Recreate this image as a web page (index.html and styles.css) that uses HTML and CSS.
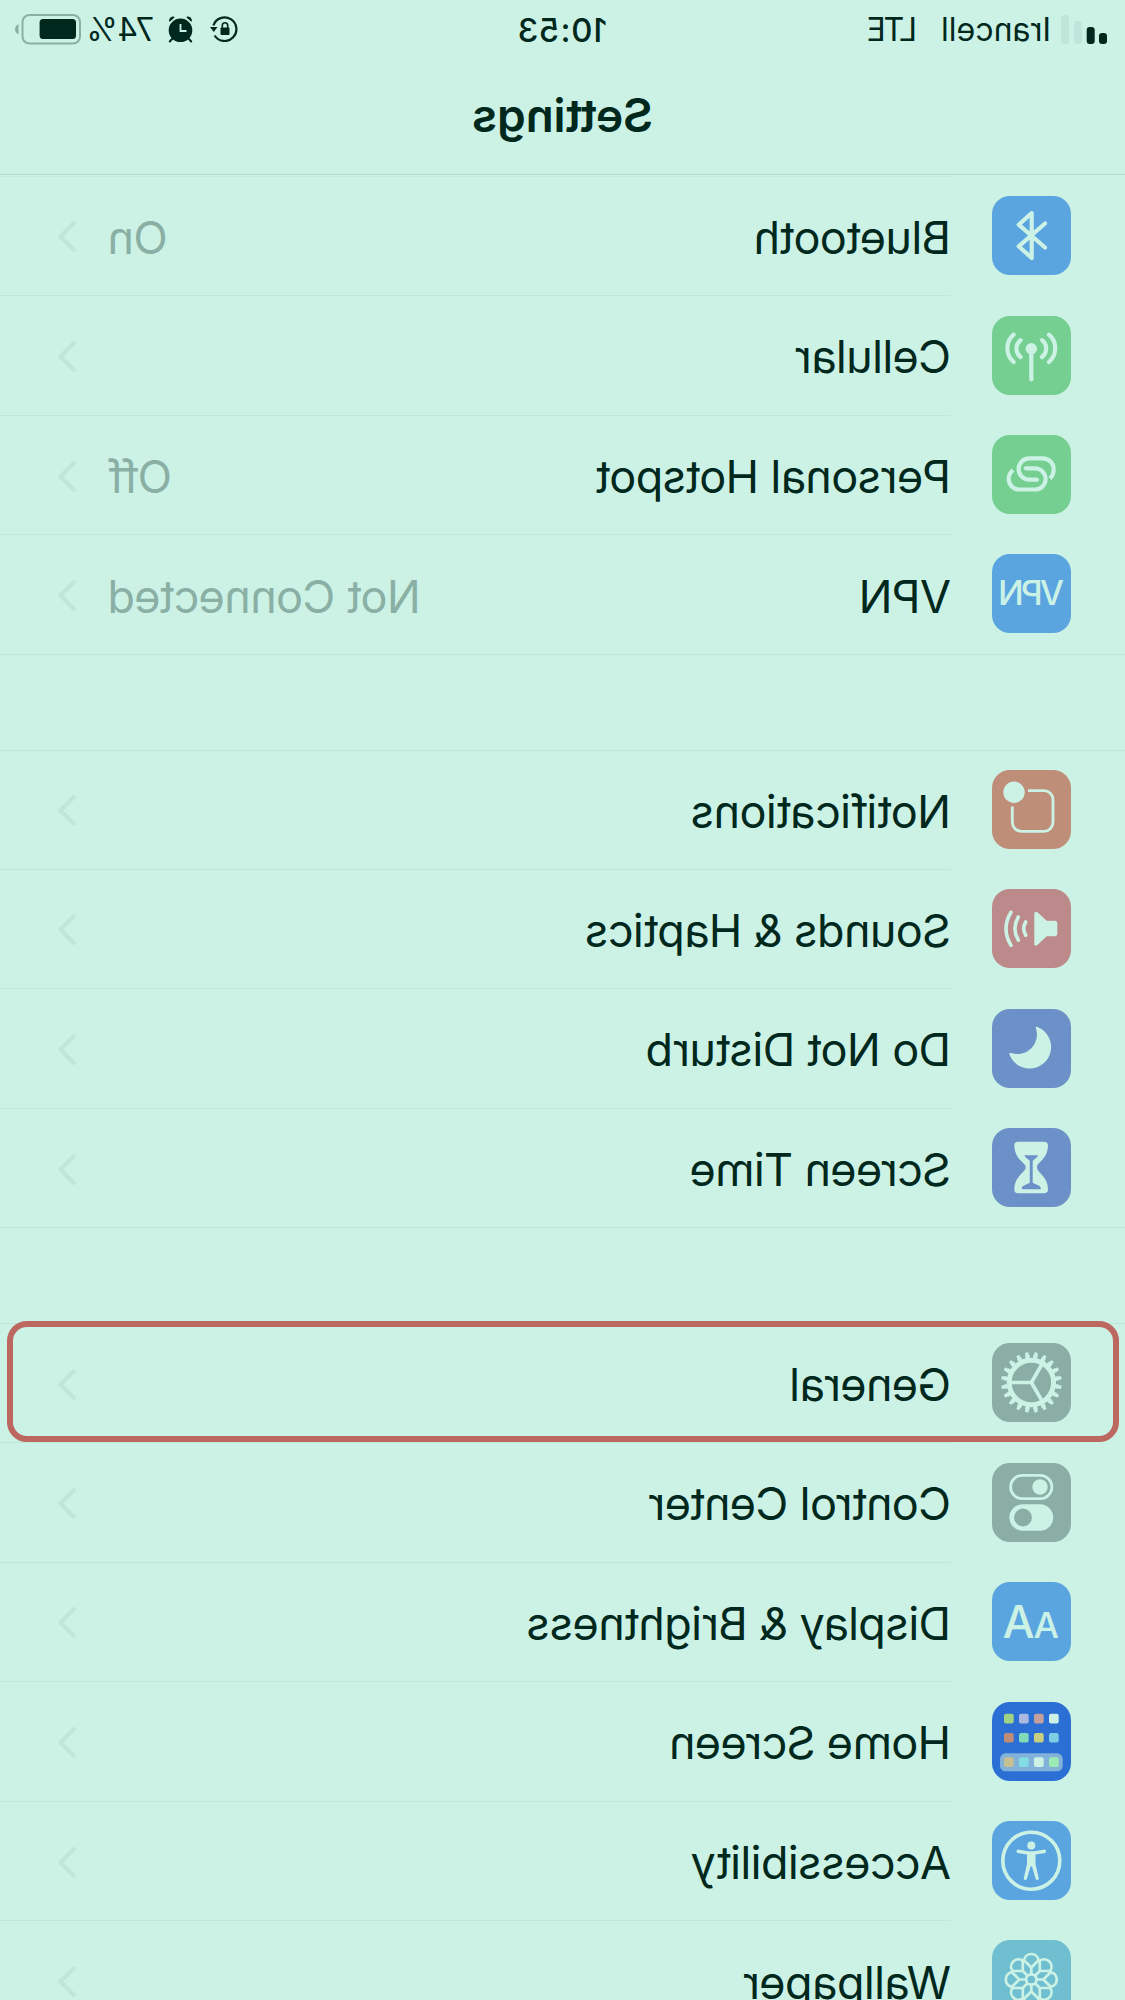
FILE: index.html
```html
<!DOCTYPE html>
<html lang="en">
<head>
    <meta charset="UTF-8">
    <title>Settings</title>
    <link rel="stylesheet" href="styles.css">
</head>
<body>
    <svg class="defs">
        <symbol id="chevron" viewBox="0 0 18 31">
            <path d="M2.3 2.2 15.5 15.5 2.3 28.8" fill="none" stroke="currentColor" stroke-width="4.2" stroke-linecap="round" stroke-linejoin="round"/>
        </symbol>
        <path id="petal" d="M0-12-7.3-19.3A7.4 7.4 0 0 1 7.3-19.3ZM0-5V-12"/>
    </svg>

    <!-- the whole screen is flipped -->
    <div class="screen">
        <header>
            <div class="status">
                <svg class="signal" viewBox="0 0 47 30">
                    <rect x="0" y="19" width="8" height="11" rx="3"/>
                    <rect x="12.3" y="13" width="8" height="17" rx="3"/>
                    <rect class="off" x="25" y="7" width="8" height="23" rx="3"/>
                    <rect class="off" x="38" y="1" width="8" height="29" rx="3"/>
                </svg>
                <span class="carrier">Irancell</span>
                <span class="net">LTE</span>
                <span class="time">10:53</span>
                <svg class="lock" viewBox="0 0 28 26">
                    <path d="M24.6 9.5A11.8 11.8 0 1 0 23.4 19.5" fill="none" stroke="currentColor" stroke-width="2.2"/>
                    <path d="M20.5 11h7.5l-3.8 5z"/>
                    <rect x="8.5" y="11.5" width="9" height="7.5" rx="1"/>
                    <path d="M10.3 12V9.5a2.7 2.7 0 0 1 5.4 0V12" fill="none" stroke="currentColor" stroke-width="1.6"/>
                </svg>
                <svg class="alarm" viewBox="0 0 25 27">
                    <circle cx="12.5" cy="14.3" r="11.8"/>
                    <path d="M4.5 22.5 1.8 25.5M20.5 22.5 23.2 25.5" stroke="currentColor" stroke-width="2" stroke-linecap="round"/>
                    <path d="M1 5.5Q1 .5 6 .6L6.5 1.5 2 5.5ZM24 5.5Q24 .5 19 .6L18.5 1.5 23 5.5Z"/>
                    <path class="hand" d="M12.5 8V15H6.5"/>
                </svg>
                <span class="percent">74%</span>
                <svg class="battery" viewBox="0 0 67 31">
                    <rect class="shell" x="1" y="1" width="57.5" height="28.6" rx="7"/>
                    <rect x="5" y="5" width="36.4" height="20" rx="3.5"/>
                    <path class="nub" d="M62.5 10Q66 12 66 15.3T62.5 20.6Z"/>
                </svg>
            </div>
            <h1>Settings</h1>
        </header>

        <div class="tail"></div>
        <ul class="group first">
            <li>
                <svg class="icon blue" viewBox="0 0 79 79"><path class="line" d="M26 27.5 52.3 50.3 39.3 62V17L52.3 28.7 26 51.5"/></svg>
                <div class="cell"><span>Bluetooth</span><em>On</em><svg class="chev"><use href="#chevron"/></svg></div>
            </li>
            <li>
                <svg class="icon green" viewBox="0 0 79 79">
                    <circle cx="39.7" cy="32.7" r="5.7"/>
                    <path class="line" d="M39.7 34V63.5M29 24.2A10.6 10.6 0 0 0 29 41M22 18.7A18.1 18.1 0 0 0 22 46M50.4 24.2A10.6 10.6 0 0 1 50.4 41M57.4 18.7A18.1 18.1 0 0 1 57.4 46"/>
                </svg>
                <div class="cell"><span>Cellular</span><svg class="chev"><use href="#chevron"/></svg></div>
            </li>
            <li>
                <svg class="icon green" viewBox="0 0 79 79">
                    <path class="line butt" d="M21 43.5Q17.2 40 17.3 34A11 10.7 0 0 1 28.3 23.3H41.7A10.7 10.7 0 0 1 41.7 44.7H34"/>
                    <path class="line butt" d="M58 35Q62.5 39 62.3 44A10.5 10.5 0 0 1 51.8 54.5H36A10.6 10.6 0 0 1 36 33.3H45.3"/>
                    <circle cx="34" cy="44.7" r="2"/><circle cx="45.3" cy="33.3" r="2"/>
                </svg>
                <div class="cell"><span>Personal Hotspot</span><em>Off</em><svg class="chev"><use href="#chevron"/></svg></div>
            </li>
            <li>
                <svg class="icon blue" viewBox="0 0 79 79"><text x="7" y="51" font-size="34" textLength="66">VPN</text></svg>
                <div class="cell"><span>VPN</span><em>Not Connected</em><svg class="chev"><use href="#chevron"/></svg></div>
            </li>
        </ul>

        <ul class="group">
            <li>
                <svg class="icon orange" viewBox="0 0 79 79">
                    <circle cx="57" cy="22.3" r="10.7"/>
                    <path class="line thin butt" d="M43 20.7H27a9 9 0 0 0-9 9V52.3a9 9 0 0 0 9 9H49.7a9 9 0 0 0 9-9V36.5"/>
                </svg>
                <div class="cell"><span>Notifications</span><svg class="chev"><use href="#chevron"/></svg></div>
            </li>
            <li>
                <svg class="icon rose" viewBox="0 0 79 79">
                    <path d="M16.5 31.7H24.3L33 23.8Q36.7 21 36.7 25V54.5Q36.7 58.5 33 55.5L24.3 47.3H16.5Q13.7 47.3 13.7 44.5V34.5Q13.7 31.7 16.5 31.7Z"/>
                    <path class="line wave" d="M45.3 33Q49.3 39.6 45.3 46.2M52.7 28Q59.5 39.6 52.7 51.2M60 23.2Q70 39.6 60 56.3"/>
                </svg>
                <div class="cell"><span>Sounds &amp; Haptics</span><svg class="chev"><use href="#chevron"/></svg></div>
            </li>
            <li>
                <svg class="icon indigo" viewBox="0 0 79 79"><path d="M33.5 18A21.5 21.5 0 1 0 61.5 45.6Q62.3 43.6 60 44A19.5 19.5 0 0 1 35.3 18.8Q35.4 17 33.5 18Z"/></svg>
                <div class="cell"><span>Do Not Disturb</span><svg class="chev"><use href="#chevron"/></svg></div>
            </li>
            <li>
                <svg class="icon indigo" viewBox="0 0 79 79">
                    <path d="M27 13.7H53Q56.8 13.7 56.7 17.5C56.3 32 45.3 34 45.3 39.3S56.7 48 56.7 61.5Q56.7 65.3 53 65.3H27Q23 65.3 23 61.5C23 48 34 45 34 39.3S23.4 32 23 17.5Q23 13.7 27 13.7Z"/>
                    <path class="cut" d="M33 27.3H46.6Q46 29.5 41.2 32.7V54.7L48 58Q50 59.5 49 61.3H30.5Q29.5 59.5 31.5 58L38.3 54.7V32.7Q33.5 29.5 33 27.3Z"/>
                </svg>
                <div class="cell"><span>Screen Time</span><svg class="chev"><use href="#chevron"/></svg></div>
            </li>
        </ul>

        <ul class="group">
            <li class="marked">
                <svg class="icon gray" viewBox="0 0 79 79">
                    <g class="gear">
                        <circle cx="39.6" cy="39.5" r="22.2" stroke-width="5"/>
                        <circle cx="39.6" cy="39.5" r="25.7" stroke-width="4" pathLength="200" stroke-dasharray="5.4 4.6" stroke-dashoffset="-2.3"/>
                        <circle cx="39.6" cy="39.5" r="28.5" stroke-width="3.6" pathLength="200" stroke-dasharray="3.6 6.4" stroke-dashoffset="-3.2"/>
                        <path d="M39.6 39.5H61M39.6 39.5 28.9 21M39.6 39.5 28.9 58" stroke-width="3.6"/>
                    </g>
                </svg>
                <div class="cell"><span>General</span><svg class="chev"><use href="#chevron"/></svg></div>
            </li>
            <li>
                <svg class="icon gray" viewBox="0 0 79 79">
                    <rect class="line thin" x="19.1" y="12.3" width="41.3" height="23.4" rx="11.7"/>
                    <circle cx="31" cy="24" r="7.7"/>
                    <rect x="17.7" y="41.3" width="44" height="26.4" rx="13.2"/>
                    <circle class="cut" cx="48" cy="54.5" r="8.9"/>
                </svg>
                <div class="cell"><span>Control Center</span><svg class="chev"><use href="#chevron"/></svg></div>
            </li>
            <li>
                <svg class="icon blue" viewBox="0 0 79 79"><text x="12" y="56" font-size="36">A</text><text x="36.5" y="56" font-size="45">A</text></svg>
                <div class="cell"><span>Display &amp; Brightness</span><svg class="chev"><use href="#chevron"/></svg></div>
            </li>
            <li>
                <svg class="icon home" viewBox="0 0 79 79">
                    <rect x="8.3" y="51.3" width="62.7" height="18" rx="5.5" fill="#82b2da"/>
                    <rect x="12.3" y="11.7" width="9.7" height="9.7" rx="2" fill="#ccf2e6"/>
                    <rect x="27.3" y="11.7" width="9.7" height="9.7" rx="2" fill="#c3a09b"/>
                    <rect x="42.3" y="11.7" width="9.7" height="9.7" rx="2" fill="#abb8e0"/>
                    <rect x="57.3" y="11.7" width="9.7" height="9.7" rx="2" fill="#a0d385"/>
                    <rect x="12.3" y="30.9" width="9.7" height="9.7" rx="2" fill="#7ccfe2"/>
                    <rect x="27.3" y="30.9" width="9.7" height="9.7" rx="2" fill="#c8cf80"/>
                    <rect x="42.3" y="30.9" width="9.7" height="9.7" rx="2" fill="#84dbb9"/>
                    <rect x="57.3" y="30.9" width="9.7" height="9.7" rx="2" fill="#c08c7a"/>
                    <rect x="12.3" y="55.2" width="9.7" height="9.7" rx="2" fill="#9cebb3"/>
                    <rect x="27.3" y="55.2" width="9.7" height="9.7" rx="2" fill="#ccf2e6"/>
                    <rect x="42.3" y="55.2" width="9.7" height="9.7" rx="2" fill="#82dce4"/>
                    <rect x="57.3" y="55.2" width="9.7" height="9.7" rx="2" fill="#c6c091"/>
                </svg>
                <div class="cell"><span>Home Screen</span><svg class="chev"><use href="#chevron"/></svg></div>
            </li>
            <li>
                <svg class="icon blue" viewBox="0 0 79 79">
                    <circle class="line wave" cx="39.7" cy="39.7" r="28.5"/>
                    <circle cx="39.7" cy="24.4" r="4"/>
                    <path d="M26 28.6 37 30.3H42.5L53.5 28.6Q55.5 30.5 53.7 31.9L44 33.5V43L47.3 57.5Q46.5 59.9 44.3 58.6L40.5 45.5H39L35.2 58.6Q33 59.9 32.2 57.5L35.5 43V33.5L25.8 31.9Q24 30 26 28.6Z"/>
                </svg>
                <div class="cell"><span>Accessibility</span><svg class="chev"><use href="#chevron"/></svg></div>
            </li>
            <li>
                <svg class="icon teal" viewBox="0 0 79 79">
                    <g class="flower" transform="translate(39.7 39.5)">
                        <circle r="5.2"/>
                        <use href="#petal"/>
                        <use href="#petal" transform="rotate(45)"/>
                        <use href="#petal" transform="rotate(90)"/>
                        <use href="#petal" transform="rotate(135)"/>
                        <use href="#petal" transform="rotate(180)"/>
                        <use href="#petal" transform="rotate(225)"/>
                        <use href="#petal" transform="rotate(270)"/>
                        <use href="#petal" transform="rotate(315)"/>
                    </g>
                </svg>
                <div class="cell"><span>Wallpaper</span><svg class="chev"><use href="#chevron"/></svg></div>
            </li>
        </ul>
    </div>
</body>
</html>
```
FILE: styles.css
```css
*{padding:0;margin:0;box-sizing:border-box;}
body{width:1125px;height:2000px;overflow:hidden;background:#ccf2e6;color:#00281d;font-family:Inter,"Liberation Sans",sans-serif;}
ul{list-style:none;}
svg{flex:none;display:block;fill:currentColor;}
.defs{display:none;}

.screen{width:1125px;height:2000px;overflow:hidden;transform:scaleX(-1);}

header{height:175px;border-bottom:1px solid #b0d8cb;}
.status{display:grid;grid-template-columns:56px 134px 310px 89px 1fr 45px 39px 73px 67px;height:56px;padding:0 14px 0 18px;align-items:center;font-size:32px;line-height:56px;}
.status span{padding-top:2px;white-space:nowrap;}
.signal{width:47px;height:30px;}
.signal .off{fill:#bfe6da;}
.net{letter-spacing:-2.2px;}
.time{font-size:33px;font-weight:500;letter-spacing:.8px;}
.lock{grid-column:6;width:28px;height:26px;}
.alarm{width:25px;height:27px;}
.alarm .hand{fill:none;stroke:#ccf2e6;stroke-width:1.8;}
.percent{letter-spacing:-0.3px;}
.battery{width:67px;height:31px;}
.battery .shell{fill:none;stroke:#8ab0a5;stroke-width:2;}
.battery .nub{fill:#8ab0a5;}
h1{margin-top:31px;font-size:46px;line-height:56px;font-weight:600;text-align:center;letter-spacing:-0.2px;}

.tail{height:1px;margin:.6px 0 0 174px;background:#c3eadf;}
.group{margin-top:95px;border-top:1px solid #bfe5d9;}
.group.first{margin-top:0;border-top:none;}
.group li{position:relative;display:flex;align-items:center;height:119.6px;padding-left:54px;}
.group:not(.first) li:first-child{height:118.6px;}
.group li:last-child{border-bottom:1px solid #bfe5d9;}
.cell{flex:1;display:flex;align-items:center;height:100%;margin-left:41px;padding:2px 58px 0 0;border-bottom:1px solid #c1e7db;font-size:45px;letter-spacing:-0.65px;}
li:last-child .cell{border-bottom:none;}
.cell span{flex:1;padding-top:1px;}
.cell em{font-style:normal;color:#8ab0a5;margin-right:32px;padding-top:1px;}
.chev{width:18px;height:31px;color:#bfe6da;}

.icon{width:79px;height:79px;margin-bottom:1.4px;border-radius:18px;color:#ccf2e6;}
.icon text{font-weight:500;}
.line{fill:none;stroke:currentColor;stroke-width:4.2;stroke-linecap:round;stroke-linejoin:round;}
.line.thin{stroke-width:2.8;}
.line.wave{stroke-width:3.6;}
.line.butt{stroke-linecap:butt;}
.gear{fill:none;stroke:currentColor;}
.flower{fill:none;stroke:currentColor;stroke-width:2.7;}
.blue{background:#5aa5e0;}
.green{background:#75cf91;}
.orange{background:#be8e78;}
.rose{background:#bc8a8a;}
.indigo{background:#6b91c8;}
.indigo .cut{fill:#6b91c8;}
.gray{background:#8aada5;}
.gray .cut{fill:#8aada5;}
.home{background:#2b6fd4;}
.teal{background:#70bfd0;}

/* frame round the General row */
.marked::before{content:"";box-sizing:border-box;position:absolute;left:6px;top:-3px;width:1112px;height:120.5px;border:6px solid #bc675f;border-radius:20px;}
```
